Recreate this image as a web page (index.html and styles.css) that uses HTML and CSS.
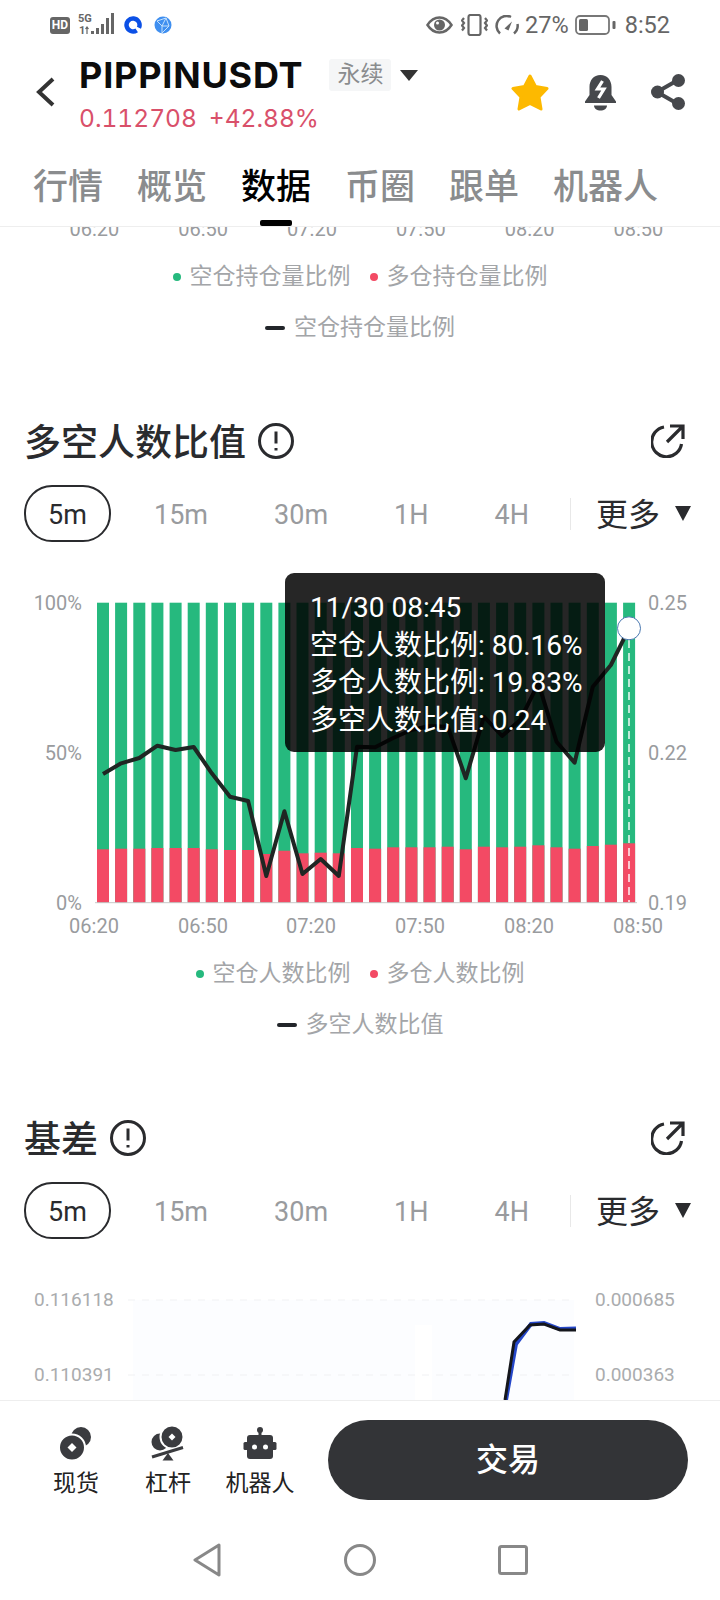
FILE: index.html
```html
<!DOCTYPE html>
<html>
<head>
  <meta charset="UTF-8">
  <title>PIPPINUSDT</title>
  <link rel="stylesheet" href="styles.css">
</head>
<body>
  <div class="screen">
    <div class="status-bar">
      <div class="status-left">
        <span class="hd-badge">HD</span>
        <svg class="signal" width="36" height="24" viewBox="0 0 36 24">
          <text x="0" y="9" class="signal-text">5G</text>
          <text x="1" y="21" class="signal-text">1</text>
          <path d="M9 14v7M7.500 16L9 14l1.500 2" class="signal-arrow"/>
          <rect x="13" y="18" width="3" height="3"/>
          <rect x="18" y="15" width="3" height="6"/>
          <rect x="23" y="11" width="3" height="10"/>
          <rect x="28" y="5" width="3" height="16"/>
          <rect x="33" y="0" width="3" height="21"/>
        </svg>
        <svg class="ring-icon" width="18" height="18" viewBox="0 0 18 18">
          <path d="M12.700 14.300A6.500 6.500 0 1 1 14.900 11.750"/>
        </svg>
        <svg class="globe-icon" width="18" height="18" viewBox="0 0 18 18">
          <circle cx="9" cy="9" r="8.500"/>
          <path d="M3 5l9-3 3 8-7 7M3 5l5 5 7 0M8 10l0 7M12 2l-4 8"/>
        </svg>
      </div>
      <div class="status-right">
        <svg class="eye-icon" width="27" height="18" viewBox="0 0 27 18">
          <path d="M1.500 9C5 3.500 9 1.500 13.500 1.500S22 3.500 25.500 9C22 14.500 18 16.500 13.500 16.500S5 14.500 1.500 9Z"/>
          <circle cx="13.500" cy="9" r="5.500"/>
          <circle class="eye-glint" cx="11.500" cy="7" r="1.500"/>
        </svg>
        <svg class="vibrate-icon" width="27" height="22" viewBox="0 0 27 22">
          <rect x="7.500" y="1" width="12" height="20" rx="2"/>
          <path d="M3 4l-2 2.500 2 2.500-2 2.500 2 2.500-2 2.500M24 4l2 2.500-2 2.500 2 2.500-2 2.500 2 2.500"/>
        </svg>
        <svg class="gauge-icon" width="25" height="20" viewBox="0 0 25 20">
          <path d="M5 18.500A10 10 0 0 1 16 2M22.500 9A10 10 0 0 1 19 18.500"/>
          <path d="M9.500 13.500L17 6.500l-3.500 9z" class="gauge-needle"/>
        </svg>
        <span class="status-text">27%</span>
        <svg class="battery-icon" width="41" height="20" viewBox="0 0 41 20">
          <rect x="1" y="1" width="33" height="18" rx="4"/>
          <rect x="4" y="4" width="9" height="12" rx="1.500" class="battery-level"/>
          <rect x="37.500" y="6" width="3" height="8" rx="1" class="battery-level"/>
        </svg>
        <span class="status-text status-time">8:52</span>
      </div>
    </div>

    <div class="header">
      <svg class="back-icon" width="20" height="32" viewBox="0 0 20 32">
        <path d="M17 3L3 16l14 13"/>
      </svg>
      <div class="symbol-block">
        <div class="symbol-row">
          <span class="symbol-name">PIPPINUSDT</span>
          <span class="symbol-tag">永续</span>
          <span class="caret caret-symbol"></span>
        </div>
        <div class="price-row">
          <span>0.112708</span>
          <span>+42.88%</span>
        </div>
      </div>
      <div class="header-actions">
        <svg width="40" height="37" viewBox="0 0 40 37">
          <path class="star" d="M20 2l5.500 10.500L37 14.500 29 23l2 12-11-5.500L9 35l2-12-8-8.500 11.500-2z"/>
        </svg>
        <svg width="33" height="37" viewBox="0 0 33 37">
          <path class="icon-fill" d="M16.500 1C9.500 1 5.500 6.500 5.500 13v8L1 27.500V29h31v-1.500L27.500 21v-8C27.500 6.500 23.500 1 16.500 1z"/>
          <path class="icon-fill" d="M10 31.500h13c0 3-3 5-6.500 5s-6.500-2-6.500-5z"/>
          <path class="bolt" d="M18.500 7l-5 8h6.500l-5.500 9"/>
        </svg>
        <svg width="35" height="36" viewBox="0 0 35 36">
          <path class="share-line" d="M27 6L6 18l21 12"/>
          <circle class="icon-fill" cx="27.500" cy="6.500" r="6.500"/>
          <circle class="icon-fill" cx="6.500" cy="18" r="6.500"/>
          <circle class="icon-fill" cx="27.500" cy="29.500" r="6.500"/>
        </svg>
      </div>
    </div>

    <div class="tabs">
      <span class="tab">行情</span>
      <span class="tab">概览</span>
      <span class="tab active">数据</span>
      <span class="tab">币圈</span>
      <span class="tab">跟单</span>
      <span class="tab">机器人</span>
    </div>

    <div class="content">
      <div class="cut-axis">
        <span>06:20</span><span>06:50</span><span>07:20</span><span>07:50</span><span>08:20</span><span>08:50</span>
      </div>
      <div class="legend">
        <div class="legend-row">
          <span class="legend-item"><i class="dot green"></i>空仓持仓量比例</span>
          <span class="legend-item"><i class="dot red"></i>多仓持仓量比例</span>
        </div>
        <div class="legend-row">
          <span class="legend-item"><i class="dash"></i>空仓持仓量比例</span>
        </div>
      </div>

      <div class="section">
        <div class="section-head">
          <h2>多空人数比值</h2>
          <svg class="info-icon" width="38" height="38" viewBox="0 0 38 38">
            <circle cx="19" cy="19" r="16.500"/>
            <path d="M19 9.500v12M19 26v2.500"/>
          </svg>
          <svg class="open-icon" width="34" height="34" viewBox="0 0 34 34">
            <path d="M13 3A15 15 0 1 0 30.500 20M16 18L32 2M19 2h13v13"/>
          </svg>
        </div>
        <div class="periods">
          <span class="period active">5m</span>
          <span class="period first">15m</span>
          <span class="period">30m</span>
          <span class="period">1H</span>
          <span class="period">4H</span>
          <span class="period-line"></span>
          <span class="period-more">更多</span>
          <span class="caret caret-more"></span>
        </div>

        <div class="chart">
          <svg class="chart-svg" width="720" height="390" viewBox="0 0 720 390">
            <g class="bars-green">
              <rect x="97" y="42.700" width="12" height="300"/>
              <rect x="115.100" y="42.700" width="12" height="300"/>
              <rect x="133.300" y="42.700" width="12" height="300"/>
              <rect x="151.400" y="42.700" width="12" height="300"/>
              <rect x="169.600" y="42.700" width="12" height="300"/>
              <rect x="187.700" y="42.700" width="12" height="300"/>
              <rect x="205.800" y="42.700" width="12" height="300"/>
              <rect x="224" y="42.700" width="12" height="300"/>
              <rect x="242.100" y="42.700" width="12" height="300"/>
              <rect x="260.300" y="42.700" width="12" height="300"/>
              <rect x="278.400" y="42.700" width="12" height="300"/>
              <rect x="296.500" y="42.700" width="12" height="300"/>
              <rect x="314.700" y="42.700" width="12" height="300"/>
              <rect x="332.800" y="42.700" width="12" height="300"/>
              <rect x="351" y="42.700" width="12" height="300"/>
              <rect x="369.100" y="42.700" width="12" height="300"/>
              <rect x="387.200" y="42.700" width="12" height="300"/>
              <rect x="405.400" y="42.700" width="12" height="300"/>
              <rect x="423.500" y="42.700" width="12" height="300"/>
              <rect x="441.700" y="42.700" width="12" height="300"/>
              <rect x="459.800" y="42.700" width="12" height="300"/>
              <rect x="477.900" y="42.700" width="12" height="300"/>
              <rect x="496.100" y="42.700" width="12" height="300"/>
              <rect x="514.200" y="42.700" width="12" height="300"/>
              <rect x="532.400" y="42.700" width="12" height="300"/>
              <rect x="550.500" y="42.700" width="12" height="300"/>
              <rect x="568.600" y="42.700" width="12" height="300"/>
              <rect x="586.800" y="42.700" width="12" height="300"/>
              <rect x="604.900" y="42.700" width="12" height="300"/>
              <rect x="623.100" y="42.700" width="12" height="300"/>
            </g>
            <g class="bars-red">
              <rect x="97" y="289.300" width="12" height="53.400"/>
              <rect x="115.100" y="288.700" width="12" height="54"/>
              <rect x="133.300" y="288.700" width="12" height="54"/>
              <rect x="151.400" y="288" width="12" height="54.700"/>
              <rect x="169.600" y="288" width="12" height="54.700"/>
              <rect x="187.700" y="288" width="12" height="54.700"/>
              <rect x="205.800" y="289.300" width="12" height="53.400"/>
              <rect x="224" y="290" width="12" height="52.700"/>
              <rect x="242.100" y="290" width="12" height="52.700"/>
              <rect x="260.300" y="294" width="12" height="48.700"/>
              <rect x="278.400" y="290.700" width="12" height="52"/>
              <rect x="296.500" y="293.300" width="12" height="49.400"/>
              <rect x="314.700" y="292.700" width="12" height="50"/>
              <rect x="332.800" y="293.300" width="12" height="49.400"/>
              <rect x="351" y="288" width="12" height="54.700"/>
              <rect x="369.100" y="288.700" width="12" height="54"/>
              <rect x="387.200" y="287.300" width="12" height="55.400"/>
              <rect x="405.400" y="287.300" width="12" height="55.400"/>
              <rect x="423.500" y="287.300" width="12" height="55.400"/>
              <rect x="441.700" y="286.700" width="12" height="56"/>
              <rect x="459.800" y="289.300" width="12" height="53.400"/>
              <rect x="477.900" y="286.700" width="12" height="56"/>
              <rect x="496.100" y="287.300" width="12" height="55.400"/>
              <rect x="514.200" y="286.700" width="12" height="56"/>
              <rect x="532.400" y="285.300" width="12" height="57.400"/>
              <rect x="550.500" y="287.300" width="12" height="55.400"/>
              <rect x="568.600" y="288.700" width="12" height="54"/>
              <rect x="586.800" y="286" width="12" height="56.700"/>
              <rect x="604.900" y="284.700" width="12" height="58"/>
              <rect x="623.100" y="283.300" width="12" height="59.400"/>
            </g>
            <line class="axis-base" x1="95" y1="342.700" x2="637" y2="342.700"/>
            <line class="cursor-line" x1="629" y1="80" x2="629" y2="342"/>
            <polyline class="ratio-line" points="103,214 121.100,203.300 139.300,198 157.400,185.700 175.600,190 193.700,187 211.800,213.300 230,236.700 248.100,241 266.300,316 284.400,251.300 302.500,314 320.700,299 338.800,316 357,186.700 375.100,187.300 393.200,178 411.400,170 429.500,166 447.700,166.700 465.800,218.300 483.900,156.700 502.100,176 520.200,160 538.400,123.300 556.500,181.700 574.600,202.700 592.800,126.700 610.900,105 629,68.300"/>
            <circle class="cursor-dot" cx="629" cy="68.300" r="11.500"/>
            <g class="axis-text">
              <text x="82" y="50" text-anchor="end">100%</text>
              <text x="82" y="200" text-anchor="end">50%</text>
              <text x="82" y="350" text-anchor="end">0%</text>
              <text x="648" y="50">0.25</text>
              <text x="648" y="200">0.22</text>
              <text x="648" y="350">0.19</text>
              <text x="94" y="373" text-anchor="middle">06:20</text>
              <text x="203" y="373" text-anchor="middle">06:50</text>
              <text x="311" y="373" text-anchor="middle">07:20</text>
              <text x="420" y="373" text-anchor="middle">07:50</text>
              <text x="529" y="373" text-anchor="middle">08:20</text>
              <text x="638" y="373" text-anchor="middle">08:50</text>
            </g>
          </svg>
          <div class="tooltip">
            <div>11/30 08:45</div>
            <div>空仓人数比例: 80.16%</div>
            <div>多仓人数比例: 19.83%</div>
            <div>多空人数比值: 0.24</div>
          </div>
        </div>

        <div class="legend">
          <div class="legend-row">
            <span class="legend-item"><i class="dot green"></i>空仓人数比例</span>
            <span class="legend-item"><i class="dot red"></i>多仓人数比例</span>
          </div>
          <div class="legend-row">
            <span class="legend-item"><i class="dash"></i>多空人数比值</span>
          </div>
        </div>
      </div>

      <div class="section">
        <div class="section-head">
          <h2>基差</h2>
          <svg class="info-icon" width="38" height="38" viewBox="0 0 38 38">
            <circle cx="19" cy="19" r="16.500"/>
            <path d="M19 9.500v12M19 26v2.500"/>
          </svg>
          <svg class="open-icon" width="34" height="34" viewBox="0 0 34 34">
            <path d="M13 3A15 15 0 1 0 30.500 20M16 18L32 2M19 2h13v13"/>
          </svg>
        </div>
        <div class="periods">
          <span class="period active">5m</span>
          <span class="period first">15m</span>
          <span class="period">30m</span>
          <span class="period">1H</span>
          <span class="period">4H</span>
          <span class="period-line"></span>
          <span class="period-more">更多</span>
          <span class="caret caret-more"></span>
        </div>

        <div class="chart">
          <svg class="chart-svg" width="720" height="160" viewBox="0 0 720 160">
            <rect class="basis-bg" x="133" y="43" width="282" height="110"/>
            <rect class="basis-bg" x="432" y="43" width="142" height="110"/>
            <rect class="basis-bg" x="415" y="43" width="17" height="25"/>
            <line class="basis-grid" x1="128" y1="43" x2="574" y2="43"/>
            <line class="basis-grid" x1="128" y1="118" x2="574" y2="118"/>
            <polyline class="basis-blue" points="506,143 516,87 531,67 544,66 560,72 576,71.500"/>
            <polyline class="basis-black" points="505,143 514,85 530,68 544,67 560,73 576,73"/>
            <g class="axis-text basis-text">
              <text x="34" y="49">0.116118</text>
              <text x="34" y="124">0.110391</text>
              <text x="595" y="49">0.000685</text>
              <text x="595" y="124">0.000363</text>
            </g>
          </svg>
        </div>
      </div>
    </div>

    <div class="footer">
      <div class="footer-main">
        <div class="action">
          <svg width="34" height="36" viewBox="0 0 34 36">
            <circle class="icon-dark" cx="22" cy="12" r="10"/>
            <circle class="coin-front" cx="13" cy="22.500" r="13"/>
            <path class="coin-hole" d="M13 18l4.500 4.500-4.500 4.500-4.500-4.500z"/>
          </svg>
          <span>现货</span>
        </div>
        <div class="action">
          <svg width="36" height="36" viewBox="0 0 36 36">
            <circle class="icon-dark" cx="10" cy="17" r="8.500"/>
            <circle class="coin-front" cx="22" cy="12" r="11.500"/>
            <path class="coin-hole" d="M22 8.500l3.500 3.500-3.500 3.500-3.500-3.500z"/>
            <path class="icon-dark" d="M18 28l-5.500 7.500h11z"/>
            <path class="lever-beam" d="M2 32l31-9.500"/>
          </svg>
          <span>杠杆</span>
        </div>
        <div class="action">
          <svg width="34" height="36" viewBox="0 0 34 36">
            <circle class="icon-dark" cx="17" cy="5" r="3"/>
            <rect class="icon-dark" x="15.500" y="6" width="3" height="5"/>
            <rect class="icon-dark" x="4" y="10" width="26" height="24" rx="3"/>
            <rect class="icon-dark" x="0.500" y="17" width="33" height="8" rx="1.500"/>
            <circle class="coin-hole" cx="11.500" cy="22" r="2.500"/>
            <circle class="coin-hole" cx="22.500" cy="22" r="2.500"/>
          </svg>
          <span>机器人</span>
        </div>
        <div class="trade-btn">交易</div>
      </div>
      <div class="nav-bar">
        <svg width="30" height="34" viewBox="0 0 30 34"><path d="M27 2L3 17l24 15z"/></svg>
        <svg width="32" height="32" viewBox="0 0 32 32"><circle cx="16" cy="16" r="14.500"/></svg>
        <svg width="30" height="30" viewBox="0 0 30 30"><rect x="1.500" y="1.500" width="27" height="27" rx="2"/></svg>
      </div>
    </div>
  </div>
</body>
</html>
```

FILE: styles.css
```css
:root {
  --text-dark: #2a2b2e;
  --text-grey: #999b9e;
  --tab-grey: #8a8c8e;
  --green: #26b97e;
  --red: #f34a64;
  --price-red: #d9506a;
  --icon-dark: #3a3b3f;
}

* {
  margin: 0;
  padding: 0;
  box-sizing: border-box;
}

body {
  font-family: Roboto, 'Noto Sans CJK SC', sans-serif;
  background-color: white;
  color: var(--text-dark);
}

.screen {
  width: 720px;
  height: 1600px;
  display: flex;
  flex-direction: column;
  overflow: hidden;
  background-color: white;
}

/* Status bar */
.status-bar {
  height: 50px;
  flex: none;
  display: flex;
  align-items: center;
  justify-content: space-between;
  padding: 0 50px;
  color: #666;
}

.status-left,
.status-right {
  display: flex;
  align-items: center;
}

.hd-badge {
  width: 20px;
  height: 17px;
  background-color: #666;
  color: white;
  border-radius: 3px;
  font-size: 12px;
  font-weight: 700;
  line-height: 17px;
  text-align: center;
  margin-right: 8px;
}

.signal {
  fill: #666;
  margin-right: 10px;
}

.signal-text {
  font-size: 11px;
  font-weight: 700;
}

.signal-arrow {
  fill: none;
  stroke: #666;
  stroke-width: 1.200;
}

.ring-icon {
  margin-right: 12px;
  fill: none;
  stroke: #0b50e6;
  stroke-width: 4.500;
}

.globe-icon circle {
  fill: #3f8ff0;
}

.globe-icon path {
  fill: none;
  stroke: #c4e0fc;
  stroke-width: 1;
}

.eye-icon {
  margin-right: 8px;
}

.eye-icon path {
  fill: none;
  stroke: #666;
  stroke-width: 2.500;
}

.eye-icon circle {
  fill: #666;
}

.eye-icon .eye-glint {
  fill: white;
}

.vibrate-icon {
  margin-right: 7px;
}

.vibrate-icon rect,
.vibrate-icon path {
  fill: none;
  stroke: #666;
  stroke-width: 2.200;
}

.gauge-icon {
  margin-right: 5px;
}

.gauge-icon path {
  fill: none;
  stroke: #666;
  stroke-width: 2.500;
}

.gauge-icon .gauge-needle {
  fill: #666;
  stroke: none;
}

.status-text {
  font-size: 23.500px;
  line-height: 30px;
  margin-right: 6px;
}

.status-time {
  margin-left: 9px;
  margin-right: 0;
}

.battery-icon rect {
  fill: none;
  stroke: #777;
  stroke-width: 1.800;
}

.battery-icon .battery-level {
  fill: #666;
  stroke: none;
}

/* Header */
.header {
  height: 88px;
  flex: none;
  display: flex;
  align-items: center;
  padding: 0 34px 0 36px;
}

.back-icon {
  margin-right: 23px;
  margin-bottom: 4px;
}

.back-icon path {
  fill: none;
  stroke: #333;
  stroke-width: 4;
}

.symbol-block {
  flex: 1;
}

.symbol-row {
  display: flex;
  align-items: center;
  height: 40px;
}

.symbol-name {
  font-family: Inter, sans-serif;
  font-size: 36px;
  font-weight: 700;
  color: #0c0c0c;
  letter-spacing: 0.800px;
}

.symbol-tag {
  width: 62px;
  height: 32px;
  margin-left: 26px;
  background-color: #f5f6f7;
  border-radius: 3px;
  color: #8a8c8e;
  font-size: 23px;
  line-height: 32px;
  text-align: center;
}

.caret {
  width: 0;
  height: 0;
  border-style: solid;
  border-color: #333 transparent transparent transparent;
}

.caret-symbol {
  margin-left: 9px;
  border-width: 11px 9px 0 9px;
}

.price-row {
  display: flex;
  gap: 12px;
  height: 30px;
  margin-top: 8px;
  font-family: Inter, sans-serif;
  font-size: 24.500px;
  font-variant-numeric: tabular-nums;
  line-height: 30px;
  color: var(--price-red);
}

.header-actions {
  display: flex;
  align-items: center;
  gap: 34px;
  margin-bottom: 4px;
}

.star {
  fill: #fdb900;
  stroke: #fdb900;
  stroke-width: 3;
  stroke-linejoin: round;
}

.icon-fill {
  fill: #46484c;
}

.bolt {
  fill: none;
  stroke: white;
  stroke-width: 3.200;
}

.share-line {
  fill: none;
  stroke: #46484c;
  stroke-width: 4;
}

/* Tabs */
.tabs {
  height: 89px;
  flex: none;
  display: flex;
  gap: 34px;
  padding: 30px 0 0 33px;
  border-bottom: 1px solid #eee;
  position: relative;
  z-index: 1;
  background-color: white;
}

.tab {
  position: relative;
  font-size: 35px;
  font-weight: 500;
  line-height: 40px;
  height: 40px;
  color: var(--tab-grey);
}

.tab.active {
  color: black;
  font-weight: 500;
}

.tab.active::after {
  content: "";
  position: absolute;
  left: 19px;
  bottom: -18px;
  width: 32px;
  height: 6px;
  border-radius: 2px;
  background-color: black;
}

/* Scrolled content */
.content {
  flex: 1;
  overflow: hidden;
}

.cut-axis {
  display: flex;
  margin-top: -10px;
  padding-left: 40px;
  font-size: 20px;
  line-height: 24px;
  color: var(--text-grey);
}

.cut-axis span {
  width: 108.800px;
  text-align: center;
}

.legend {
  display: flex;
  flex-direction: column;
  gap: 21px;
  margin-bottom: 77px;
}

.cut-axis + .legend {
  margin-top: 20px;
}

.legend-row {
  display: flex;
  justify-content: center;
  gap: 19px;
  height: 30px;
}

.legend-item {
  display: flex;
  align-items: center;
  gap: 9px;
  padding-top: 2px;
  font-size: 23px;
  line-height: 30px;
  color: #a3a5a8;
}

.dot {
  width: 8px;
  height: 8px;
  border-radius: 50%;
}

.dot.green {
  background-color: var(--green);
}

.dot.red {
  background-color: var(--red);
}

.dash {
  width: 20px;
  height: 4px;
  border-radius: 2px;
  background-color: #22252a;
}

.section-head {
  display: flex;
  align-items: center;
  height: 44px;
  padding: 0 35px 0 24px;
}

.section-head h2 {
  margin-top: 5px;
  font-size: 37px;
  font-weight: 500;
  line-height: 44px;
}

.info-icon {
  margin-left: 11px;
}

.info-icon circle,
.info-icon path {
  fill: none;
  stroke: var(--text-dark);
  stroke-width: 3;
}

.open-icon {
  margin-left: auto;
}

.open-icon path {
  fill: none;
  stroke: var(--text-dark);
  stroke-width: 3.200;
}

.periods {
  display: flex;
  align-items: center;
  height: 57px;
  margin-top: 22px;
  padding-left: 24px;
}

.period {
  padding: 3px 33px 0;
  font-size: 27px;
  line-height: 57px;
  color: var(--text-grey);
}

.period.first {
  margin-left: 10px;
}

.period.active {
  width: 87px;
  height: 57px;
  padding: 0;
  border: 2px solid var(--text-dark);
  border-radius: 28px;
  color: var(--text-dark);
  line-height: 57px;
  text-align: center;
}

.period-line {
  width: 1px;
  height: 32px;
  margin-left: 8px;
  background-color: #e8e8e8;
}

.period-more {
  margin-left: 25px;
  margin-bottom: 4px;
  font-size: 32px;
  color: var(--text-dark);
}

.caret-more {
  margin-left: 15px;
  border-width: 15px 8.500px 0 8.500px;
  border-top-color: var(--text-dark);
}

/* Charts */
.chart {
  position: relative;
  margin-top: 18px;
  margin-bottom: 8px;
}

.chart-svg {
  display: block;
}

.bars-green {
  fill: var(--green);
}

.bars-red {
  fill: var(--red);
}

.axis-base {
  stroke: #c8c8c8;
  stroke-width: 1;
}

.cursor-line {
  stroke: rgba(255, 255, 255, 0.7);
  stroke-width: 2;
  stroke-dasharray: 8 5;
}

.ratio-line {
  fill: none;
  stroke: #1f2623;
  stroke-width: 4;
  stroke-linejoin: round;
}

.cursor-dot {
  fill: white;
  stroke: #4a78b0;
  stroke-width: 1;
}

.axis-text text {
  font-size: 20px;
  fill: var(--text-grey);
}

.basis-text text {
  font-size: 19px;
  fill: #aaacae;
}

.basis-bg {
  fill: #fcfdff;
}

.basis-grid {
  stroke: #f0f1f3;
  stroke-width: 1;
  stroke-dasharray: 7 7;
}

.basis-blue {
  fill: none;
  stroke: #2547c9;
  stroke-width: 4;
}

.basis-black {
  fill: none;
  stroke: #14161c;
  stroke-width: 3;
}

.tooltip {
  position: absolute;
  left: 285px;
  top: 13px;
  width: 320px;
  height: 179px;
  padding: 16px 0 0 25px;
  border-radius: 9px;
  background-color: rgba(0, 0, 0, 0.85);
  color: white;
  font-size: 28px;
  line-height: 37.500px;
  white-space: nowrap;
}

/* Footer */
.footer {
  height: 200px;
  flex: none;
  border-top: 1px solid #eee;
  background-color: white;
}

.footer-main {
  display: flex;
  align-items: flex-start;
  padding: 19px 0 0 30px;
}

.action {
  width: 92px;
  padding-top: 5px;
  display: flex;
  flex-direction: column;
  align-items: center;
  gap: 9px;
  font-size: 23px;
  line-height: 28px;
  color: #222;
}

.action svg {
  display: block;
}

.icon-dark {
  fill: var(--icon-dark);
}

.coin-front {
  fill: var(--icon-dark);
  stroke: white;
  stroke-width: 2;
}

.coin-hole {
  fill: white;
}

.lever-beam {
  fill: none;
  stroke: var(--icon-dark);
  stroke-width: 3;
}

.trade-btn {
  width: 360px;
  height: 80px;
  margin-left: 22px;
  border-radius: 40px;
  background-color: #333437;
  color: white;
  font-size: 32px;
  font-weight: 500;
  line-height: 80px;
  text-align: center;
}

.nav-bar {
  display: flex;
  align-items: center;
  justify-content: center;
  gap: 122px;
  height: 34px;
  margin-top: 43px;
}

.nav-bar path,
.nav-bar circle,
.nav-bar rect {
  fill: none;
  stroke: #888;
  stroke-width: 3;
  stroke-linejoin: round;
}
```
